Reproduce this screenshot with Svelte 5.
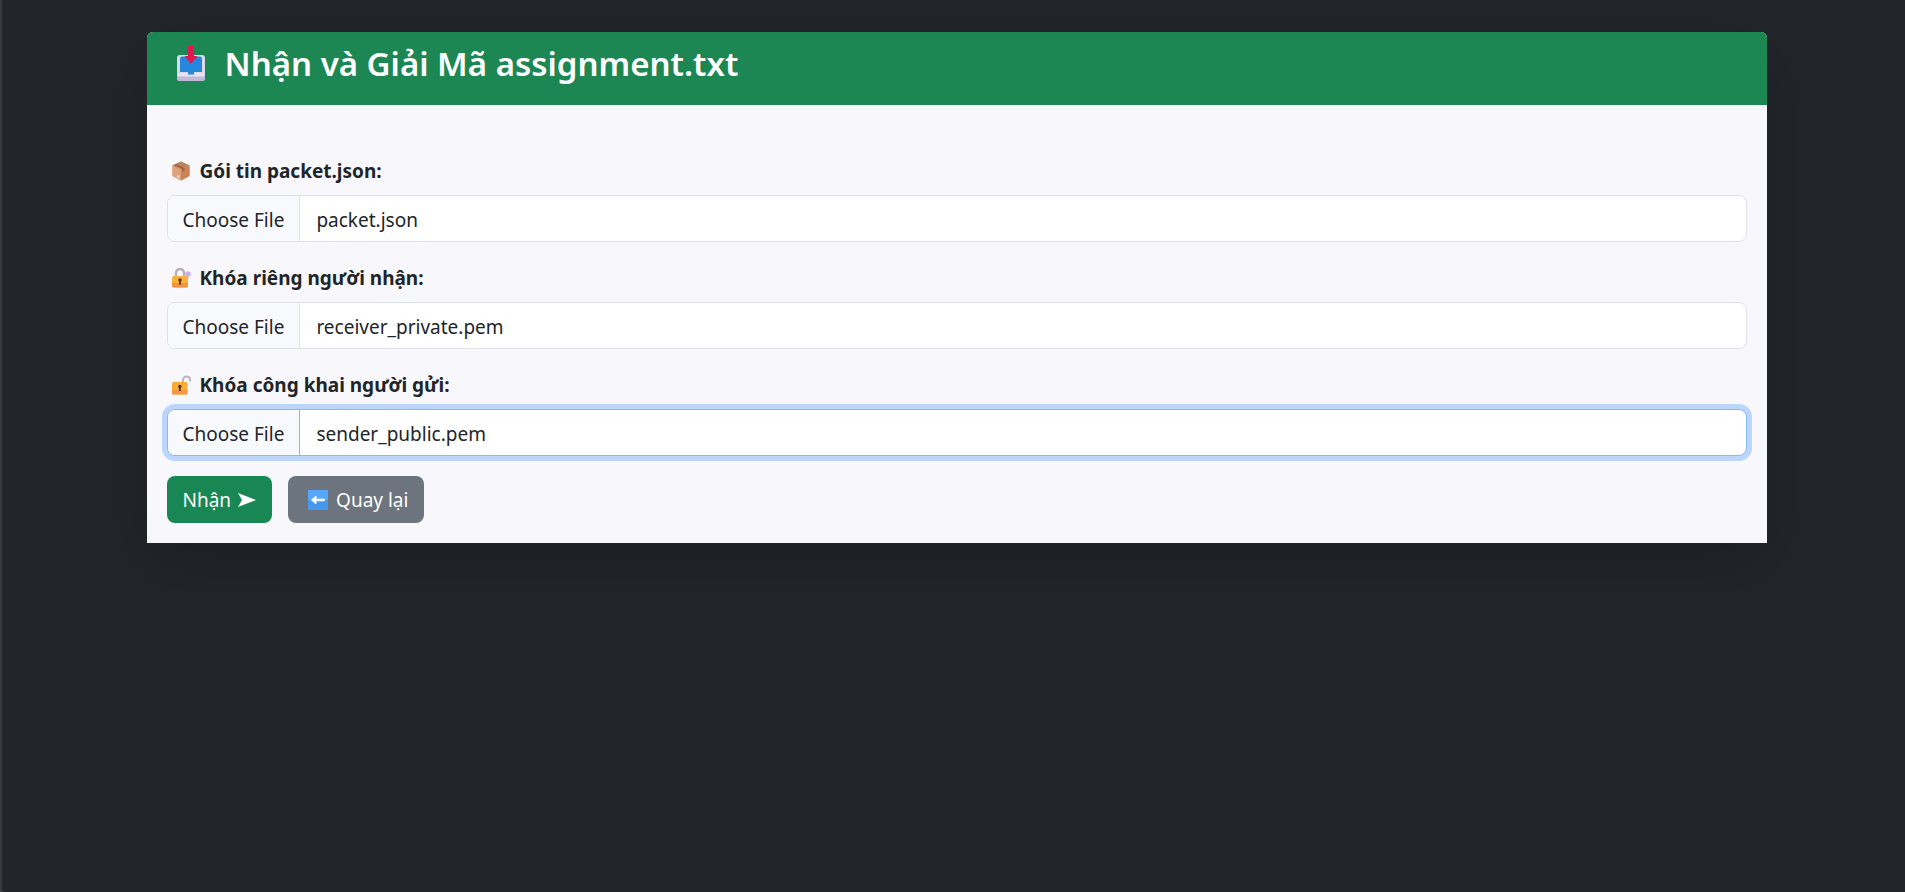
<script>
  import { onMount } from 'svelte';

  const fields = [
    { id: 'packet', label: 'Gói tin packet.json:', file: 'packet.json', icon: 'box' },
    { id: 'private-key', label: 'Khóa riêng người nhận:', file: 'receiver_private.pem', icon: 'locked' },
    { id: 'public-key', label: 'Khóa công khai người gửi:', file: 'sender_public.pem', icon: 'open' }
  ];

  let inputs = $state([]);

  onMount(() => {
    fields.forEach((field, i) => {
      const transfer = new DataTransfer();
      transfer.items.add(new File([''], field.file));
      inputs[i].files = transfer.files;
    });
    inputs[2].focus();
  });
</script>

<main>
  <section class="card">
    <header>
      <h1>
        <svg class="inbox" viewBox="0 0 28 36" aria-hidden="true">
          <rect x="0" y="9" width="28" height="26" rx="3" fill="#dcd9ec" />
          <path d="M0 30h28v2a3 3 0 0 1-3 3H3a3 3 0 0 1-3-3z" fill="#c4b8d8" />
          <path d="M3 12.500a2 2 0 0 1 2-2h18a2 2 0 0 1 2 2V26h-8v2.500h-6V26H3z" fill="#2688dc" />
          <path d="M1 27h10v2.500h6V27h10v3.500H1z" fill="#e6e3f2" />
          <path d="M11 0h6v10h3.500L14 18 7.500 10H11z" fill="#e0184f" />
        </svg>
        <span>Nhận và Giải Mã assignment.txt</span>
      </h1>
    </header>

    <form onsubmit={(e) => e.preventDefault()}>
      {#each fields as field, i}
        <div class="field">
          <label for={field.id}>
            <svg class="emoji" viewBox="0 0 20 20" aria-hidden="true">
              {#if field.icon === 'box'}
                <path d="M10 .5 18.500 4.500V15L10 19.500 1.500 15V4.500z" fill="#d6905f" />
                <path d="M10 .5 18.500 4.500 10 8.500 1.500 4.500z" fill="#bd835d" />
                <path d="M1.500 4.500 10 8.500v11L1.500 15z" fill="#dda27a" />
                <path d="M10 8.500 18.500 4.500V15L10 19.500z" fill="#ca8256" />
                <path d="M2.800 4 11.200 8v2.500l2.300-1.100V6.900L5 2.900z" fill="#85543b" opacity=".6" />
                <path d="m6 13.700 2.500 1.200v2.600L6 16.300z" fill="#f3d5c1" />
              {:else if field.icon === 'locked'}
                <circle cx="17" cy="6" r="2.800" fill="#c8b1e7" />
                <path d="m15.800 8-3 8 2 1 3-8z" fill="#b7a0dc" />
                <path d="M5 10V5a4 4 0 0 1 8 0v5" fill="none" stroke="#b6adb5" stroke-width="2.400" />
                <rect x="1" y="8" width="16" height="11.500" rx="2" fill="#fbb038" />
                <path d="M1 15h16v2.500a2 2 0 0 1-2 2H3a2 2 0 0 1-2-2z" fill="#f59440" />
                <circle cx="9" cy="12" r="1.700" fill="#4b302c" />
                <path d="M8.300 12h1.400l.3 4.500H8z" fill="#4b302c" />
              {:else}
                <path d="M12 8V5a3.600 3.600 0 0 1 7.200 0v1.500" fill="none" stroke="#bbb4bb" stroke-width="2" />
                <rect x="1" y="7" width="15.500" height="12.500" rx="1.500" fill="#fbac35" />
                <path d="M1 15h15.500v3a1.500 1.500 0 0 1-1.500 1.500H2.500A1.500 1.500 0 0 1 1 18z" fill="#f5983f" />
                <circle cx="8.800" cy="11.500" r="1.700" fill="#4b302c" />
                <path d="M8.100 11.500h1.400l.3 4.500h-2z" fill="#4b302c" />
              {/if}
            </svg>
            <span>{field.label}</span>
          </label>
          <input id={field.id} type="file" bind:this={inputs[i]} />
        </div>
      {/each}

      <div class="actions">
        <button class="receive" type="submit">
          <span>Nhận</span>
          <svg class="send" viewBox="0 0 18 14" aria-hidden="true">
            <path d="M0 0 18 7 0 14 4 7z" fill="currentColor" />
          </svg>
        </button>
        <a class="back" href="#back">
          <svg class="arrow" viewBox="0 0 20 20" aria-hidden="true">
            <rect width="20" height="20" rx="1" fill="#4598ee" />
            <path d="M0 0h20v10H0z" fill="#57a8fc" />
            <path d="M3.500 10 8 6v3.200h8.500v1.600H8V14z" fill="#fff" stroke="#fff" stroke-linejoin="round" />
          </svg>
          <span>Quay lại</span>
        </a>
      </div>
    </form>
  </section>
</main>

<style>
  :global(body) {
    margin: 0;
    background: #383c3e;
  }

  main,
  main * {
    box-sizing: border-box;
  }

  main {
    min-height: 100vh;
    margin-left: 2px;
    padding: 32px 24px 32px 30px;
    border-radius: 0 0 0 4px;
    background: #22252a;
    color: #212529;
    font: 19px/30px "Segoe UI", "Noto Sans", sans-serif;
  }

  .card {
    max-width: 1620px;
    margin: 0 auto;
    border-radius: 6px 6px 0 0;
    background: #f8f8fc;
    box-shadow: 0 20px 60px rgba(0, 0, 0, 0.175);
  }

  header {
    padding: 11px 20px 20px;
    border-radius: 6px 6px 0 0;
    background: #1c8753;
    color: #fff;
  }

  h1 {
    display: flex;
    align-items: center;
    gap: 20px;
    margin: 0;
    padding-left: 10px;
    font-size: 33px;
    font-weight: 600;
    line-height: 42px;
  }

  .inbox {
    width: 28px;
    height: 36px;
  }

  form {
    padding: 50px 20px 20px;
  }

  .field {
    margin-bottom: 20px;
  }

  label {
    display: flex;
    align-items: center;
    gap: 9px;
    margin-bottom: 9px;
    padding: 1px 0 0 4px;
    font-weight: 700;
  }

  .emoji {
    width: 20px;
    height: 20px;
  }

  input {
    display: block;
    width: 100%;
    height: 47px;
    padding: 8px 16px;
    overflow: hidden;
    border: 1px solid #dee2e6;
    border-radius: 8px;
    background: #fff;
    color: #212529;
    font: inherit;
  }

  input::file-selector-button {
    height: 47px;
    margin: -8px 16px -8px -16px;
    padding: 8px 15px;
    border: 0 solid #dee2e6;
    border-right-width: 1px;
    background: #f8f9fc;
    color: #212529;
    font: inherit;
  }

  input:focus {
    outline: 0;
    border-color: #86b7fe;
    box-shadow: 0 0 0 5px #bcd6fb;
  }

  input:focus::file-selector-button {
    border-color: #86b7fe;
  }

  .actions {
    display: flex;
    gap: 16px;
  }

  .receive,
  .back {
    display: flex;
    align-items: center;
    height: 47px;
    padding: 1px 16px 0;
    border: 0;
    border-radius: 8px;
    color: #fff;
    font: inherit;
    text-decoration: none;
  }

  .receive {
    gap: 7px;
    background: #198754;
  }

  .back {
    gap: 8px;
    padding-left: 20px;
    background: #6c757d;
  }

  .send {
    width: 18px;
    height: 14px;
  }

  .arrow {
    width: 20px;
    height: 20px;
  }
</style>
